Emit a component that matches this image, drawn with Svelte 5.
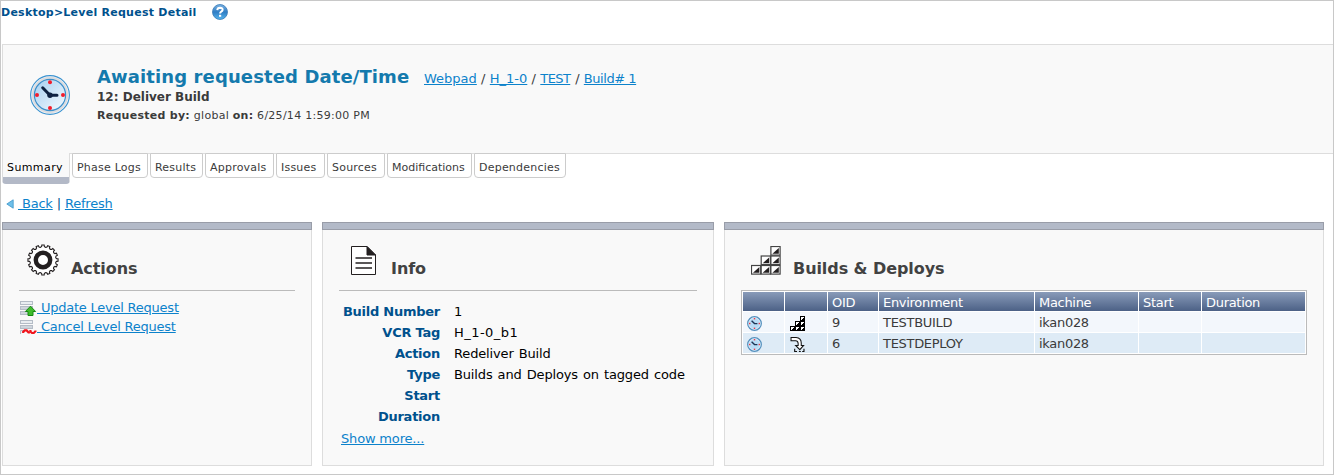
<script>
  const crumbs = ['Webpad', 'H_1-0', 'TEST', 'Build# 1'];
  const tabs = [
    ['Phase Logs', 76], ['Results', 53], ['Approvals', 69], ['Issues', 49],
    ['Sources', 58], ['Modifications', 85], ['Dependencies', 92]
  ];
  const info = [
    ['Build Number', '1'], ['VCR Tag', 'H_1-0_b1'], ['Action', 'Redeliver Build'],
    ['Type', 'Builds and Deploys on tagged code'], ['Start', ''], ['Duration', '']
  ];
  const rows = [
    { kind: 'build', oid: '9', env: 'TESTBUILD', machine: 'ikan028' },
    { kind: 'deploy', oid: '6', env: 'TESTDEPLOY', machine: 'ikan028' }
  ];
  const blocks = [[20, 0], [10, 10], [20, 10], [0, 20], [10, 20], [20, 20]];

  function gearPath() {
    let d = '';
    const n = 16;
    for (let i = 0; i < n; i++) {
      const pts = [[-0.44, 13], [-0.25, 13.6], [-0.2, 15.1], [0.2, 15.1], [0.25, 13.6], [0.44, 13]];
      for (const [o, r] of pts) {
        const a = ((i + o) / n) * Math.PI * 2 - Math.PI / 2;
        d += (d ? 'L' : 'M') + (16 + r * Math.cos(a)).toFixed(2) + ' ' + (16 + r * Math.sin(a)).toFixed(2);
      }
    }
    return d + 'Z';
  }
</script>

{#snippet clock(cls)}
  <svg class={cls} viewBox="0 0 40 40">
    <defs>
      <linearGradient id="face" x1="0" y1="0" x2="1" y2="1">
        <stop offset="0" stop-color="#a5cff0" /><stop offset="1" stop-color="#f4faff" />
      </linearGradient>
    </defs>
    <circle cx="20" cy="20" r="19.4" fill="#f3f5f8" stroke="#3b93d0" stroke-width="1.1" />
    <circle cx="20" cy="20" r="17.2" fill="none" stroke="#dcdcdf" stroke-width="2" />
    <circle cx="20" cy="20" r="15.6" fill="url(#face)" stroke="#3c8fca" stroke-width="1.2" />
    <g fill="#f21c2b">
      <circle cx="20" cy="7.3" r="2" /><circle cx="33" cy="20" r="2" />
      <circle cx="20" cy="33" r="2" /><circle cx="7" cy="20" r="2" />
    </g>
    <path d="M12.7 12.8L20 20.2H27" fill="none" stroke="#0e2242" stroke-width="3" stroke-linecap="round" />
    <circle cx="20" cy="20.3" r="2.7" fill="#0e2242" />
  </svg>
{/snippet}

{#snippet smallClock()}
  <svg class="small" viewBox="0 0 15 15">
    <circle cx="7.5" cy="7.5" r="6.8" fill="#b9dcf5" stroke="#5590bd" stroke-width="1.3" />
    <circle cx="7.5" cy="7.5" r="5.6" fill="none" stroke="#e2edf6" stroke-width=".8" />
    <g fill="#ee3a48"><rect x="6.8" y="2" width="1.4" height="1.4" /><rect x="6.8" y="11.6" width="1.4" height="1.4" /><rect x="2" y="6.8" width="1.4" height="1.4" /><rect x="11.6" y="6.8" width="1.4" height="1.4" /></g>
    <path d="M4.6 4.8L7.5 7.6H10.4" fill="none" stroke="#1c3555" stroke-width="1.4" />
  </svg>
{/snippet}

{#snippet list(up)}
  <svg class="act" viewBox="0 0 17 15">
    <g fill="#e9edf1" stroke="#b4bcc6">
      <rect x=".5" y=".5" width="12" height="3" /><rect x=".5" y="5.5" width="12" height="3" fill="#ced4dc" />
      {#if up}<rect x=".5" y="10.5" width="12" height="3" fill="#ced4dc" />{:else}<path d="M.5 14V10.5H5" />{/if}
    </g>
    {#if up}
      <path d="M10.5 5.2L15.6 10.5H13V14.5H8V10.5H5.4Z" fill="#3fbc2c" stroke="#168a12" />
    {:else}
      <path d="M3.2 13V11.8L4.8 10.4H6.6L8.8 12.8V13.6M10.4 10V11.6L12 13H13.8L15.4 11.4V10.6" fill="none" stroke="#f0141c" stroke-width="2.2" />
    {/if}
  </svg>
{/snippet}

<div class="page">
  <div class="top">
    <span>Desktop&gt;Level Request Detail</span>
    <svg class="help" viewBox="0 0 16 16">
      <defs><linearGradient id="hb" x1="0" y1="0" x2="0" y2="1"><stop offset="0" stop-color="#7db4e4" /><stop offset=".5" stop-color="#2f7dc4" /><stop offset="1" stop-color="#55b5ee" /></linearGradient></defs>
      <circle cx="8" cy="8" r="7.5" fill="url(#hb)" stroke="#3979b5" stroke-width=".8" />
      <path d="M5.3 6.1Q5.4 3.7 8 3.7Q10.7 3.8 10.6 5.8Q10.5 6.9 9.2 7.7Q8.1 8.3 8.1 9.6" fill="none" stroke="#fff" stroke-width="2" />
      <rect x="7" y="10.8" width="2.2" height="2" fill="#fff" />
    </svg>
  </div>

  <header>
    {@render clock('bigclock')}
    <div class="title">
      <div class="line1">
        <h1>Awaiting requested Date/Time</h1>
        <div class="crumbs">
          {#each crumbs as c, i}{#if i}<i>/</i>{/if}<a href="#top">{c}</a>{/each}
        </div>
      </div>
      <h2>12: Deliver Build</h2>
      <p><b>Requested by:</b> global <b>on:</b> 6/25/14 1:59:00 PM</p>
    </div>
  </header>

  <nav>
    <div class="active">Summary</div>
    {#each tabs as [name, w]}
      <div class="tab" class:tight={name.length > 12} style="width:{w}px">{name}</div>
    {/each}
  </nav>

  <div class="back">
    <svg viewBox="0 0 8 10"><path d="M7.2 .8V9.2L.8 5Z" fill="#6fc0ea" stroke="#3c95c9" stroke-width=".8" /></svg>
    <a href="#top">&nbsp;Back</a><i>|</i><a href="#top">Refresh</a>
  </div>

  <main>
    <section class="actions">
      <div class="bar"></div>
      <div class="body">
        <div class="head">
          <svg class="gear" viewBox="0 0 32 32">
            <path d={gearPath()} fill="#fff" stroke="#231f20" stroke-width="1.1" />
            <circle cx="16" cy="16" r="7.2" fill="#fff" stroke="#231f20" stroke-width="4.4" />
          </svg>
          <h3>Actions</h3>
        </div>
        <div class="links">
          <div>{@render list(true)}<a href="#top">&nbsp;Update Level Request</a></div>
          <div>{@render list(false)}<a href="#top">&nbsp;Cancel Level Request</a></div>
        </div>
      </div>
    </section>

    <section class="info">
      <div class="bar"></div>
      <div class="body">
        <div class="head">
          <svg class="doc" viewBox="0 0 25 29">
            <path d="M.5 .5H16L24.5 9V28.5H.5Z" fill="#fff" stroke="#231f20" />
            <path d="M16 .5L24.5 9H16Z" fill="#231f20" stroke="#231f20" />
            <path d="M4.5 12H21M4.5 17H21M4.5 22H21" stroke="#231f20" stroke-width="1.6" />
          </svg>
          <h3>Info</h3>
        </div>
        <dl>
          {#each info as [k, v]}<dt>{k}</dt><dd>{v}</dd>{/each}
        </dl>
        <a class="more" href="#top">Show more...</a>
      </div>
    </section>

    <section class="builds">
      <div class="bar"></div>
      <div class="body">
        <div class="head">
          <svg class="stack" viewBox="0 0 30 29">
            {#each blocks as [x, y]}
              <rect x={x * 0.97 + 0.5} y={y * 0.95 + 0.5} width="9.2" height="8.6" fill="#fff" stroke="#444" stroke-width="1.2" />
              <path d="M{x * 0.97 + 8.4} {y * 0.95 + 2}V{y * 0.95 + 7.7}H{x * 0.97 + 2}Z" fill="#231f20" />
            {/each}
          </svg>
          <h3>Builds &amp; Deploys</h3>
        </div>
        <div class="table">
          {#each ['', '', 'OID', 'Environment', 'Machine', 'Start', 'Duration'] as h}<div class="th">{h}</div>{/each}
          {#each rows as r, i}
            <div class="td" class:alt={i}>{@render smallClock()}</div>
            <div class="td" class:alt={i}>
              {#if r.kind === 'build'}
                <svg class="kind" viewBox="0 0 15 15" shape-rendering="crispEdges">
                  <path d="M10 0H15V15H0V10H5V5H10Z" />
                  <path d="M11 1h3v1h-1v1h-1v1h-1zM11 6h3v1h-1v1h-1v1h-1zM11 11h3v1h-1v1h-1v1h-1zM6 6h3v1h-1v1h-1v1h-1zM6 11h3v1h-1v1h-1v1h-1zM1 11h3v1h-1v1h-1v1h-1z" fill="#fff" />
                </svg>
              {:else}
                <svg class="kind" viewBox="0 0 15 16">
                  <path d="M.6 .6H6Q11.5 1 11.5 6.5V9H14L10 13.5L5.5 9H8.2V7Q8 4 5.5 4H.6Z" fill="#fff" stroke="#111" stroke-width="1.1" />
                  <path d="M4.5 12.5V15.4H7M14.4 12.5V15.4H12.5M9 15.4h2" fill="none" stroke="#111" stroke-width="1.2" />
                </svg>
              {/if}
            </div>
            <div class="td" class:alt={i}>{r.oid}</div>
            <div class="td" class:alt={i}>{r.env}</div>
            <div class="td" class:alt={i}>{r.machine}</div>
            <div class="td" class:alt={i}></div>
            <div class="td" class:alt={i}></div>
          {/each}
        </div>
      </div>
    </section>
  </main>
</div>

<style>
  :global(body) { background: #fff; }
  .page {
    box-sizing: border-box; width: 1334px; height: 475px; border: 1px solid #c8c8c8;
    font-family: Verdana, "DejaVu Sans", sans-serif; font-size: 13px; color: #3b3b3b;
    display: flex; flex-direction: column; overflow: hidden; white-space: nowrap;
  }
  svg { display: block; flex: none; }
  h1, h2, h3, p, dl, dd { margin: 0; }
  i { font-style: normal; }
  a { color: #0c82cb; text-decoration: underline; }
  .top { height: 43px; display: flex; align-items: flex-start; font-size: 11px; font-weight: bold; color: #00518d; line-height: 24px; letter-spacing: .25px; }
  .top span { width: 211px; }
  .help { width: 16px; height: 16px; margin-top: 3px; }
  header {
    box-sizing: border-box; height: 110px; margin-left: 1px; border: 1px solid #ddd; border-right: 0;
    background: #f9f9f9; display: flex;
  }
  .bigclock { width: 40px; height: 40px; margin: 30px 27px 0 27px; }
  .title { padding-top: 19px; }
  .line1 { display: flex; height: 24px; line-height: 24px; }
  h1 { font-size: 18px; color: #147aad; width: 327px; line-height: 26px; letter-spacing: .11px; }
  .crumbs { line-height: 30px; }
  .crumbs i { margin: 0 4.3px; }
  .crumbs a:nth-of-type(3) { letter-spacing: -.6px; margin-right: .6px; }
  .crumbs a:nth-of-type(4) { letter-spacing: -.45px; }
  h2 { font-size: 12px; line-height: 19px; }
  p { font-size: 11px; line-height: 17px; letter-spacing: .27px; }
  nav { display: flex; gap: 2px; height: 37px; padding-left: 1px; align-items: flex-start; font-size: 11px; margin-top: -1px; }
  nav div { box-sizing: border-box; padding-left: 4px; line-height: 27px; border: 1px solid #ccc; letter-spacing: .22px; }
  .active { width: 68px; height: 31px; color: #000; background: #f9f9f9; border: solid #ddd; border-width: 0 1px; border-bottom: 7px solid #b3b9c7; border-radius: 0 0 4px 4px; padding-top: 1px; letter-spacing: .4px; }
  .tab { height: 25px; border-radius: 0 0 4px 4px; background: #fff; }
  .tight { letter-spacing: 0; }
  .back { display: flex; height: 32px; padding-left: 5px; line-height: 28px; align-items: flex-start; color: #00518d; letter-spacing: -.2px; }
  .back svg { width: 8px; height: 10px; margin: 9px 4px 0 0; }
  .back i { margin: 0 4px; }
  main { display: flex; gap: 10px; padding-left: 1px; height: 244px; }
  section { display: flex; flex-direction: column; height: 244px; }
  .bar { box-sizing: border-box; height: 8px; background: #b3bac8; border: 1px solid #999da8; }
  .body { box-sizing: border-box; flex: 1; border: 1px solid #ddd; border-top: 0; background: #f9f9f9; padding: 0 16px; }
  .actions { width: 310px; }
  .info { width: 392px; }
  .builds { width: 600px; }
  .head { box-sizing: border-box; height: 61px; display: flex; border-bottom: 1px solid #bbb; }
  .builds .head { height: 60px; border: 0; }
  h3 { font-size: 16px; line-height: 20px; margin-top: 29px; color: #424242; letter-spacing: -.07px; }
  .gear { width: 32px; height: 32px; margin: 14px 12px 0 8px; }
  .doc { width: 25px; height: 29px; margin: 16px 15px 0 12px; }
  .stack { width: 30px; height: 29px; margin: 16px 12px 0 10px; }
  .links { padding-top: 7px; letter-spacing: -.23px; }
  .links div { display: flex; height: 19px; line-height: 19px; align-items: flex-start; }
  .act { width: 17px; height: 15px; margin: 3px 0 0 1px; }
  dl { display: grid; grid-template-columns: 101px 1fr; column-gap: 14px; grid-auto-rows: 21px; line-height: 21px; padding-top: 10px; color: #000; }
  dt { text-align: right; font-weight: bold; color: #00518d; letter-spacing: -.25px; }
  dd { letter-spacing: -.15px; word-spacing: 1.1px; }
  dd:nth-of-type(2) { letter-spacing: .45px; }
  .more { display: block; width: max-content; margin-left: 2px; line-height: 23px; letter-spacing: -.17px; }
  .table {
    box-sizing: border-box; width: 566px; display: grid; gap: 1px; padding: 1px; border: 1px solid #bbb; background: #fff;
    grid-template-columns: 41px 42px 50px 155px 103px 62px 103px; grid-template-rows: 19px 20px 20px; letter-spacing: -.3px;
  }
  .th { color: #fff; background: linear-gradient(#899bb9, #4c6186); padding-left: 4px; line-height: 22px; height: 19px; }
  .td { background: #f3f7fc; padding-left: 4px; line-height: 22px; height: 20px; overflow: hidden; }
  .alt { background: #deebf6; }
  .small { width: 15px; height: 15px; margin-top: 4px; }
  .kind { width: 15px; height: 15px; margin: 4px 0 0 1px; }
</style>
